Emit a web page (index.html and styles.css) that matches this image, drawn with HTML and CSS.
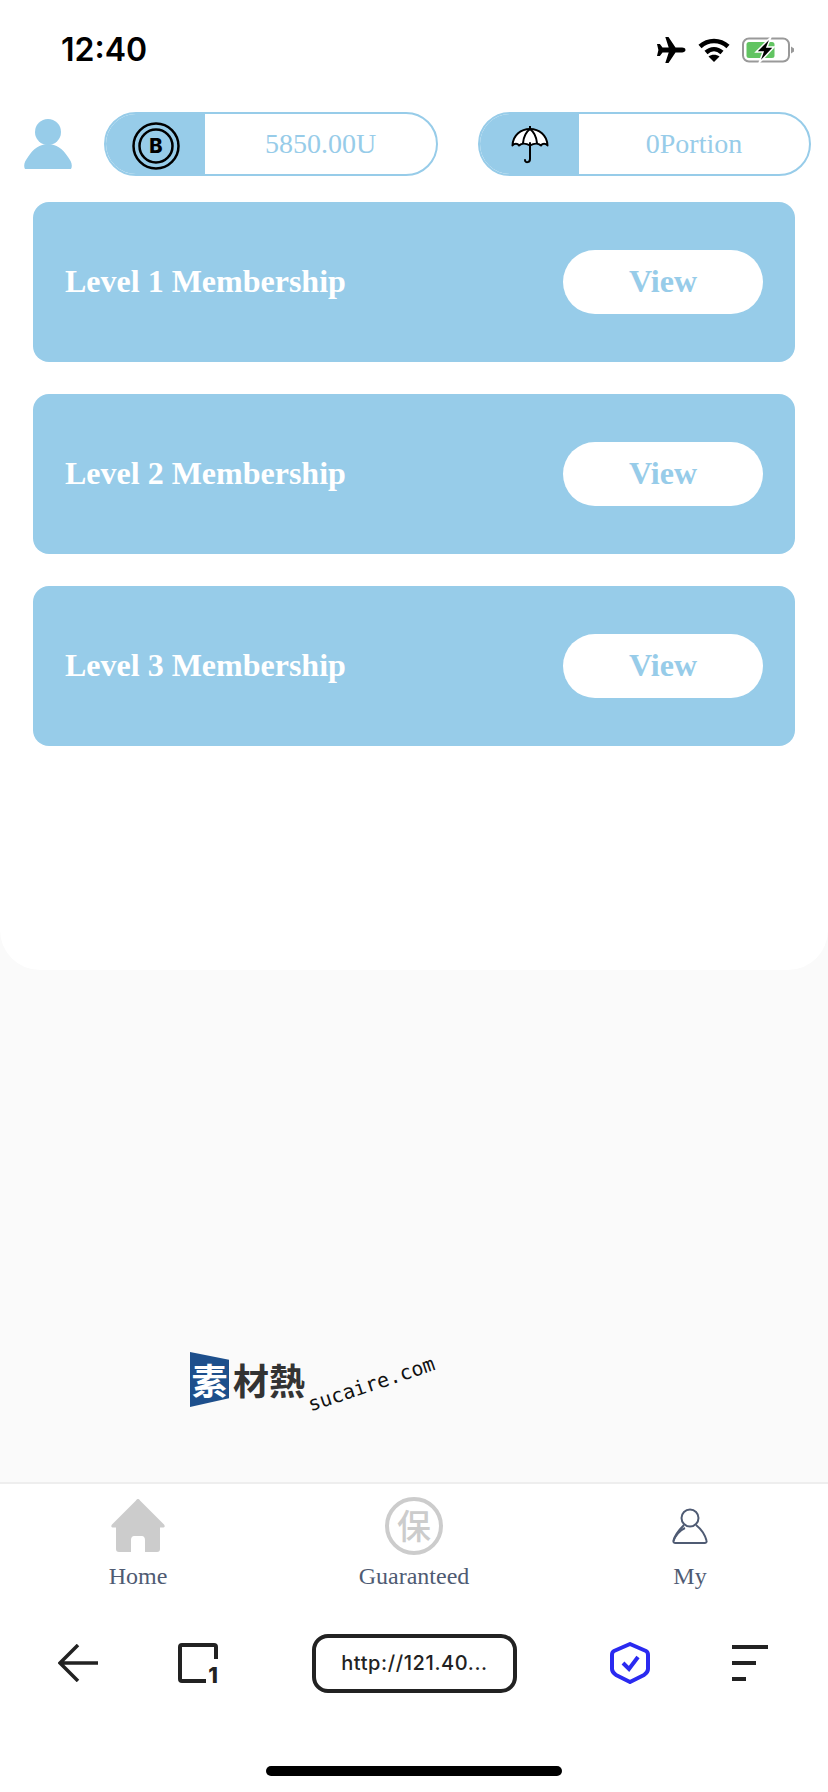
FILE: index.html
```html
<!DOCTYPE html>
<html lang="en">
<head>
  <meta charset="UTF-8">
  <meta name="viewport" content="width=device-width, initial-scale=1.0">
  <title>Membership</title>
  <link rel="stylesheet" href="styles.css">
</head>
<body>

  <div class="page">

    <!-- White panel -->
    <main class="panel">
      <div class="status-bar">
        <span class="clock">12:40</span>
        <div class="status-icons">
          <svg width="30" height="26" viewBox="0 0 30 26"><path d="M29.500 13c0-1.600-1.800-2.400-3.400-2.400H19.500L12.500 0H9.300l3.400 10.600H6.500L3.900 7H1l1.400 6L1 19h2.900l2.600-3.600h6.200L9.300 26h3.200l7-10.600h6.600c1.600 0 3.400-.8 3.400-2.400z" fill="#000"/></svg>
          <svg width="32" height="24" viewBox="0 0 32 24"><path d="M2 8.500C10 1 22 1 30 8.500" fill="none" stroke="#000" stroke-width="4.500"/><path d="M8 14.500c5-4.500 11-4.500 16 0" fill="none" stroke="#000" stroke-width="4.500"/><path d="M16 24l-5.500-5.500c3-2.500 8-2.500 11 0z" fill="#000"/></svg>
          <svg class="battery" width="53" height="26" viewBox="0 0 53 26">
            <rect x="1" y="1.500" width="46" height="23" rx="6" fill="#fff" stroke="#999" stroke-width="2"/>
            <rect x="4.500" y="5" width="28" height="16" rx="2.500" fill="#62c462"/>
            <path d="M49 9.500l3 2v3l-3 2z" fill="#999"/>
            <path d="M29 0L14 15h7l-4 11 15-16h-7z" fill="#000" stroke="#fff" stroke-width="1.500"/>
          </svg>
        </div>
      </div>

      <!-- Balance row -->
      <div class="summary">
        <svg class="avatar" width="48" height="50" viewBox="0 0 48 50"><circle cx="24" cy="13" r="13" fill="#97cce9"/><path d="M1 50C-1 46 1 42 4 38 9 30 16 25 24 25s15 5 20 13c3 4 5 8 3 12z" fill="#97cce9"/></svg>
        <div class="pill pill-first">
          <div class="pill-icon">
            <svg class="coin" width="48" height="48" viewBox="0 0 48 48">
              <circle cx="24" cy="24" r="22.500" fill="none" stroke="#000" stroke-width="2.500"/>
              <circle cx="24" cy="24" r="16.500" fill="none" stroke="#000" stroke-width="2.500"/>
              <text x="24" y="31" class="coin-letter" text-anchor="middle">B</text>
            </svg>
          </div>
          <div class="pill-value">5850.00U</div>
        </div>
        <div class="pill">
          <div class="pill-icon">
            <svg class="brolly" width="38" height="38" viewBox="0 0 38 38">
              <path d="M1.500 19.500C2 9 10 3 19 3s17 6 17.500 16.500c-2-2.500-5-2.500-6.500 0-2.500-2.500-7-2.500-11 0-4-2.500-8.500-2.500-11 0-1.500-2.500-4.500-2.500-6.500 0z" fill="#fff" stroke="#000" stroke-width="2" stroke-linejoin="round"/>
              <path d="M19 0.500V3M19 3c-4 3-6.500 9-7 14M19 3c4 3 6.500 9 7 14M19 17v16c0 4-5 4-5 1" fill="none" stroke="#000" stroke-width="2" stroke-linecap="round"/>
            </svg>
          </div>
          <div class="pill-value">0Portion</div>
        </div>
      </div>

      <!-- Membership cards -->
      <section class="levels">
        <div class="level-card">
          <span class="level-name">Level 1 Membership</span>
          <a class="view-btn" href="#">View</a>
        </div>
        <div class="level-card">
          <span class="level-name">Level 2 Membership</span>
          <a class="view-btn" href="#">View</a>
        </div>
        <div class="level-card">
          <span class="level-name">Level 3 Membership</span>
          <a class="view-btn" href="#">View</a>
        </div>
      </section>
    </main>

    <!-- Grey area with watermark -->
    <div class="backdrop">
      <div class="watermark">
        <span class="mark-flag">素</span>
        <span class="mark-name">材熱</span>
        <span class="mark-url">sucaire.com</span>
      </div>
    </div>

    <!-- Tab bar -->
    <nav class="tabs">
      <a class="tab" href="#">
        <span class="tab-icon">
          <svg width="54" height="54" viewBox="0 0 54 54"><path fill-rule="evenodd" d="M25 1.500c1-2 3-2 4 0l24 24c1.500 2 .5 3-1.500 3H49v21.500c0 2-1 3-3 3h-12V41c0-2.500-1.500-4-3-4h-8c-1.500 0-3 1.500-3 4v12H8c-2 0-3-1-3-3V28.500H2.500C.5 28.500-.5 27.500 1 25.500z" fill="#ccc"/></svg>
        </span>
        <span class="tab-label">Home</span>
      </a>
      <a class="tab" href="#">
        <span class="tab-icon"><span class="stamp">保</span></span>
        <span class="tab-label">Guaranteed</span>
      </a>
      <a class="tab" href="#">
        <span class="tab-icon">
          <svg width="36" height="36" viewBox="0 0 36 36"><g fill="none" stroke="#4f5b73" stroke-width="2"><circle cx="18" cy="10" r="8.500"/><path d="M12 17C8 21 3 27 1.500 32.500c-.5 1.500.5 2.500 2 2.500h29c1.500 0 2.500-1 2-2.500C33 27 29 21 24 17"/><path d="M13 20C8 22 3 28 1.500 33"/></g></svg>
        </span>
        <span class="tab-label">My</span>
      </a>
    </nav>

    <!-- Browser toolbar -->
    <div class="browser-bar">
      <svg width="40" height="38" viewBox="0 0 40 38"><path d="M20 1L2 19l18 18M2 19h38" fill="none" stroke="#222" stroke-width="3.500"/></svg>
      <svg class="tab-square" width="42" height="46" viewBox="0 0 42 46">
        <path d="M38 16V4c0-1.500-.5-2-2-2H4C2.500 2 2 2.500 2 4v32c0 1.500.5 2 2 2h24" fill="none" stroke="#222" stroke-width="4"/>
        <text x="40" y="40" class="tab-count" text-anchor="end">1</text>
      </svg>
      <div class="url-box">http://121.40...</div>
      <svg width="40" height="42" viewBox="0 0 40 42">
        <path d="M20 2l16 7q2 1 2 4v14q0 3-4 6l-14 7-14-7q-4-3-4-6V13q0-3 2-4z" fill="none" stroke="#2a2af0" stroke-width="4" stroke-linejoin="round"/>
        <path d="M13 21l6 6 9-12" fill="none" stroke="#2a2af0" stroke-width="4"/>
      </svg>
      <div class="menu-lines">
        <span class="line-long"></span>
        <span class="line-mid"></span>
        <span class="line-short"></span>
      </div>
    </div>

    <div class="home-bar"><span></span></div>
  </div>

</body>
</html>
```

FILE: styles.css
```css
/* Page frame */
body {
  margin: 0;
  background-color: #fafafa;
  font-family: "Liberation Serif", serif;
}

a {
  text-decoration: none;
}

.page {
  width: 828px;
  height: 1792px;
  display: flex;
  flex-direction: column;
  overflow: hidden;
}

/* White panel */
.panel {
  height: 970px;
  flex-shrink: 0;
  box-sizing: border-box;
  background-color: #fff;
  border-radius: 0 0 40px 40px;
}

.status-bar {
  height: 100px;
  box-sizing: border-box;
  padding: 34px 33px 0 61px;
  display: flex;
  justify-content: space-between;
  align-items: flex-start;
}

.clock {
  font-family: Inter, sans-serif;
  font-size: 32px;
  font-weight: 600;
  line-height: 32px;
  color: #000;
}

.status-icons {
  display: flex;
  align-items: center;
  gap: 12px;
  padding-top: 3px;
}

/* Balance row */
.summary {
  margin-top: 12px;
  padding-left: 24px;
  display: flex;
  align-items: center;
}

.avatar {
  margin-right: 32px;
}

.pill {
  width: 333px;
  height: 64px;
  box-sizing: border-box;
  border: 2px solid #97cce9;
  border-radius: 32px;
  display: flex;
  overflow: hidden;
}

.pill-first {
  width: 334px;
  margin-right: 40px;
}

.pill-icon {
  width: 99px;
  background-color: #97cce9;
  display: flex;
  align-items: center;
  justify-content: center;
  flex-shrink: 0;
}

.coin {
  margin: 4px 0 0 1px;
}

.brolly {
  margin-top: 2px;
}

.pill-value {
  flex: 1;
  text-align: center;
  font-size: 28px;
  line-height: 60px;
  color: #97cce9;
}

.coin-letter {
  font-family: Inter, sans-serif;
  font-size: 20px;
  font-weight: 800;
}

/* Membership cards */
.levels {
  margin-top: 26px;
  padding: 0 33px;
  display: flex;
  flex-direction: column;
  gap: 32px;
}

.level-card {
  height: 160px;
  box-sizing: border-box;
  padding: 0 32px;
  background-color: #97cce9;
  border-radius: 16px;
  display: flex;
  align-items: center;
  justify-content: space-between;
}

.level-name {
  padding-bottom: 2px;
  font-size: 32px;
  font-weight: bold;
  color: #fff;
}

.view-btn {
  width: 200px;
  height: 64px;
  background-color: #fff;
  border-radius: 32px;
  text-align: center;
  font-size: 32px;
  font-weight: bold;
  line-height: 62px;
  color: #97cce9;
}

/* Grey area */
.backdrop {
  height: 512px;
  flex-shrink: 0;
  box-sizing: border-box;
  padding: 382px 0 0 190px;
}

.watermark {
  display: flex;
  align-items: flex-start;
}

.mark-flag {
  width: 39px;
  height: 55px;
  background-color: #1d4f8c;
  clip-path: polygon(0 0, 100% 14%, 100% 84%, 0 100%);
  font-family: "Noto Sans CJK SC", sans-serif;
  font-size: 36px;
  font-weight: bold;
  line-height: 55px;
  text-align: center;
  color: #fff;
}

.mark-name {
  margin-left: 4px;
  font-family: "Noto Sans CJK TC", sans-serif;
  font-size: 36px;
  font-weight: bold;
  line-height: 55px;
  color: #333;
}

.mark-url {
  width: 132px;
  margin-top: 20px;
  font-family: "DejaVu Sans Mono", monospace;
  font-size: 20px;
  line-height: 24px;
  color: #111;
  white-space: nowrap;
  transform: rotate(-18.5deg);
}

/* Tab bar */
.tabs {
  height: 123px;
  flex-shrink: 0;
  box-sizing: border-box;
  padding-top: 13px;
  border-top: 2px solid #eee;
  background-color: #fff;
  display: grid;
  grid-template-columns: repeat(3, 1fr);
}

.tab {
  display: flex;
  flex-direction: column;
  align-items: center;
}

.tab-icon {
  height: 58px;
  display: flex;
  align-items: center;
  justify-content: center;
}

.tab-label {
  margin-top: 7px;
  font-size: 24px;
  line-height: 28px;
  color: #4f5b73;
}

.stamp {
  width: 58px;
  height: 58px;
  box-sizing: border-box;
  border: 4px solid #ccc;
  border-radius: 50%;
  font-family: "Noto Sans CJK SC", sans-serif;
  font-size: 34px;
  font-weight: 500;
  line-height: 48px;
  text-align: center;
  color: #ccc;
}

/* Browser toolbar */
.browser-bar {
  height: 116px;
  flex-shrink: 0;
  padding: 0 0 0 58px;
  background-color: #fff;
  display: grid;
  grid-template-columns: 120px 134px 298px 122px 36px;
  align-items: center;
}

.tab-square {
  margin-top: 6px;
}

.url-box {
  width: 205px;
  height: 59px;
  box-sizing: border-box;
  border: 4px solid #222;
  border-radius: 16px;
  font-family: Inter, sans-serif;
  font-size: 20px;
  font-weight: 500;
  letter-spacing: 0.6px;
  line-height: 51px;
  text-align: center;
  color: #222;
}

.tab-count {
  font-family: Inter, sans-serif;
  font-size: 22px;
  font-weight: 800;
  fill: #222;
}

.menu-lines {
  display: flex;
  flex-direction: column;
  gap: 12px;
}

.menu-lines span {
  height: 4px;
  background-color: #222;
}

.line-long {
  width: 36px;
}

.line-mid {
  width: 24px;
}

.line-short {
  width: 14px;
}

.home-bar {
  height: 71px;
  flex-shrink: 0;
  background-color: #fff;
  display: flex;
  justify-content: center;
}

.home-bar span {
  width: 296px;
  height: 10px;
  margin-top: 45px;
  background-color: #000;
  border-radius: 5px;
}
```
